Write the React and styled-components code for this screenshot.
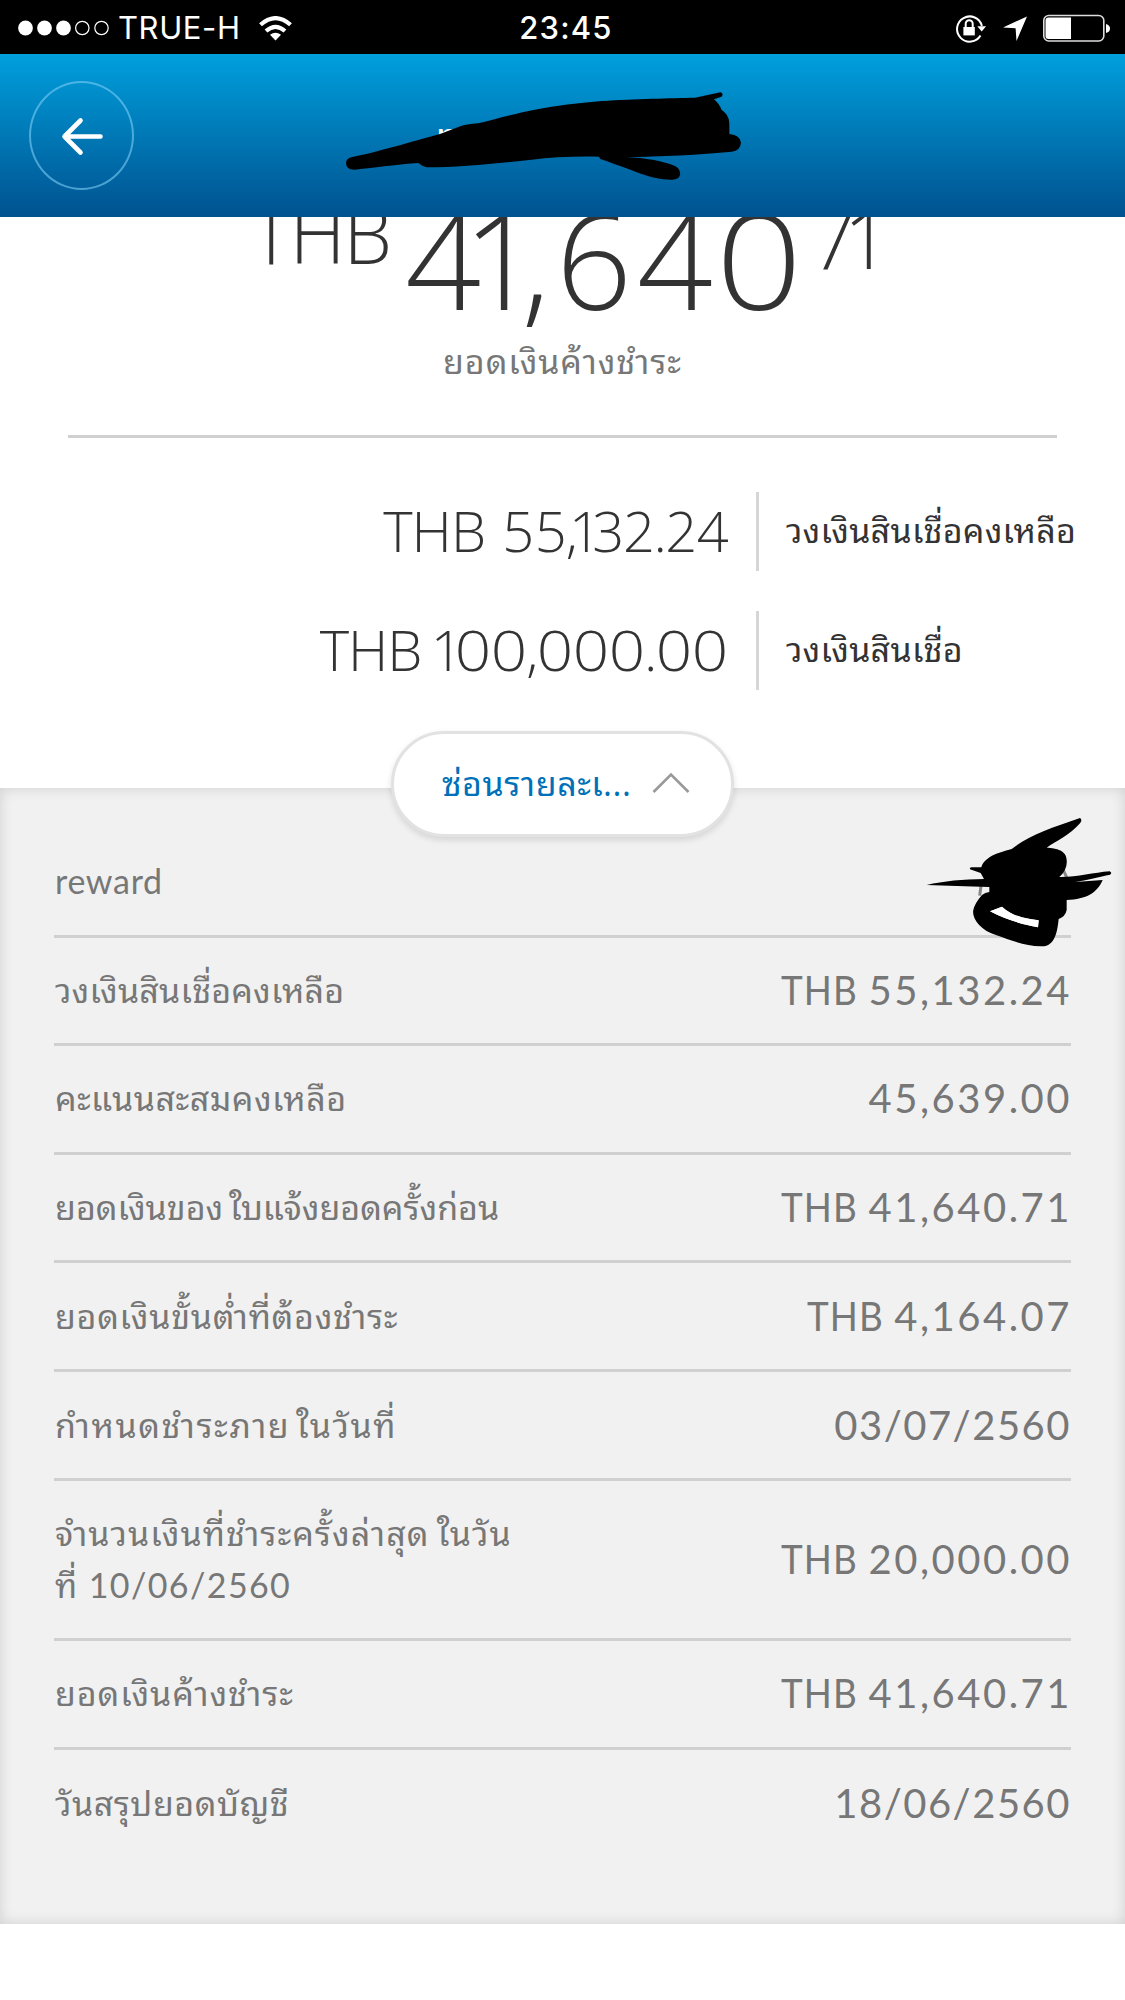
import React from "react";
import styled, { createGlobalStyle } from "styled-components";

const Global = createGlobalStyle`
  * { box-sizing: border-box; }
  html, body { margin: 0; padding: 0; background: #fff; }
`;

const thai = `"Garuda", "Waree", "Umpush", "Noto Sans Thai Looped", "Loma", "Noto Sans Thai", "Noto Sans", sans-serif`;

const Screen = styled.main`
  position: relative;
  width: 1125px;
  height: 2000px;
  overflow: hidden;
  background: #fff;
  font-family: "Open Sans", ${thai};
  color: #333;
`;

const StatusBar = styled.header`
  height: 54px;
  background: #000;
  color: #fff;
  display: grid;
  grid-template-columns: 1fr auto 1fr;
  align-items: center;
  padding: 2px 14px 0 18px;
  font: 400 31px/44px Inter, Roboto, sans-serif;
`;
const StatusLeft = styled.div`display: flex; align-items: center;`;
const StatusRight = styled.div`display: flex; align-items: center; justify-content: flex-end;`;
const Carrier = styled.span`margin: 0 18px 0 8px; letter-spacing: 0.6px;`;
const Clock = styled.span`font-weight: 550; letter-spacing: 1.2px; padding-left: 3px;`;

const NavBar = styled.nav`
  position: relative;
  z-index: 2;
  height: 163px;
  background: linear-gradient(#009fdd, #00528f);
  display: flex;
  align-items: center;
  padding-left: 29px;
`;
const BackButton = styled.button`
  width: 105px;
  height: 109px;
  padding: 0;
  border: 2px solid rgba(125, 205, 245, 0.6);
  border-radius: 50%;
  background: none;
  display: grid;
  place-items: center;
`;
const Title = styled.h1`
  margin: 0 0 0 302px;
  color: #fff;
  font: 600 37px/50px "Open Sans", sans-serif;
`;
const Ink = styled.svg`
  position: absolute;
  left: ${(p) => p.$x}px;
  top: ${(p) => p.$y}px;
  pointer-events: none;
`;

const Balance = styled.section`
  display: flow-root;
  height: 221px;
  margin: 0 68px;
  border-bottom: 3px solid #d0d0d0;
`;
const Amount = styled.div`
  display: flex;
  align-items: flex-start;
  height: 130px;
  margin-top: -32px;
  font-weight: 300;
`;
const Currency = styled.span`
  width: 322px;
  margin-right: 13.5px;
  text-align: right;
  font-size: 81px;
  line-height: 95px;
  letter-spacing: -2px;
  transform: scaleX(0.955);
  transform-origin: right;
`;
const Whole = styled.span`font-size: 133px; line-height: 147px; white-space: nowrap;`;
const Cents = styled.span`font-size: 81px; line-height: 105px; margin-left: 7.5px; white-space: nowrap;`;
const Figures = styled.span`margin-left: ${(p) => p.$lead}em;`;
const Glyph = styled.span`letter-spacing: ${(p) => p.$track}em;`;
const WideGlyph = styled(Glyph)`
  display: inline-block;
  transform: scaleX(1.14);
  transform-origin: 0.286em 50%;
`;
const Caption = styled.p`
  margin: 21px 0 0;
  text-align: center;
  font-size: 34px;
  line-height: 50px;
  letter-spacing: 0.9px;
  color: #777;
`;

const Limits = styled.section`
  height: 350px;
  padding-top: 54px;
  display: flex;
  flex-direction: column;
  gap: 40px;
`;
const LimitRow = styled.div`
  display: grid;
  grid-template-columns: 756px 1fr;
  height: 79px;
`;
const LimitValue = styled.div`
  text-align: right;
  white-space: nowrap;
  padding-right: 28px;
  font-size: 56px;
  font-weight: 300;
  line-height: 76px;
`;
const LimitUnit = styled.span`letter-spacing: -1px; margin-right: 17px;`;
const LimitLabel = styled.div`
  border-left: 3px solid #d6d6d6;
  padding-left: 27px;
  font-size: 34px;
  line-height: 77px;
  letter-spacing: 0.25px;
  white-space: nowrap;
`;

const Toggle = styled.button`
  position: absolute;
  z-index: 3;
  left: 391px;
  top: 731px;
  width: 343px;
  height: 106px;
  border: 3px solid #e2e2e2;
  border-radius: 53px;
  background: #fff;
  box-shadow: 0 3px 6px rgba(0, 0, 0, 0.12);
  display: flex;
  align-items: center;
  justify-content: space-between;
  padding: 0 41px 2px 48px;
  color: #0071b8;
  font: 400 34px/50px "Open Sans", ${thai};
  letter-spacing: 0.55px;
`;

const Details = styled.section`
  height: 1136px;
  background: #f1f1f1;
  padding: 40px 54px 0;
  box-shadow: inset 0 0 14px rgba(0, 0, 0, 0.14);
`;
const Row = styled.div`
  height: ${(p) => p.$h}px;
  display: flex;
  align-items: center;
  justify-content: space-between;
  border-bottom: ${(p) => (p.$last ? 0 : "3px solid #d0d0d0")};
  color: #777;
`;
const RowLabel = styled.div`
  padding: 0 0 1px 1px;
  font: 400 34px/52px Lato, ${thai};
`;
const LabelLine = styled.div`
  letter-spacing: ${(p) => p.$track}px;
  word-spacing: ${(p) => p.$gap || 0}px;
  white-space: nowrap;
`;
const RowValue = styled.div`
  display: flex;
  padding-bottom: 1px;
  font: 400 40px/52px Lato, sans-serif;
`;
const Unit = styled.span`
  width: 87.5px;
  letter-spacing: 1.2px;
  transform: scaleX(0.92);
  transform-origin: left;
`;
const Figure = styled.span`
  letter-spacing: ${(p) => (p.$date ? 1.5 : 2.5)}px;
  margin-right: ${(p) => (p.$date ? 0 : -1)}px;
`;

const rows = [
  { lines: [["reward", 0.7]], h: 109.5 },
  { lines: [["วงเงินสินเชื่อคงเหลือ", 0.2]], unit: "THB", value: "55,132.24", h: 108.6 },
  { lines: [["คะแนนสะสมคงเหลือ", 0.5]], value: "45,639.00", h: 108.7 },
  { lines: [["ยอดเงินของ ใบแจ้งยอดครั้งก่อน", 0, -3]], unit: "THB", value: "41,640.71", h: 108.7 },
  { lines: [["ยอดเงินขั้นต่ำที่ต้องชำระ", 0.72]], unit: "THB", value: "4,164.07", h: 108.7 },
  { lines: [["กำหนดชำระภาย ในวันที่", 1.6, -4.5]], date: "03/07/2560", h: 108.7 },
  {
    lines: [["จำนวนเงินที่ชำระครั้งล่าสุด ในวัน", 1.05, -2.5], ["ที่ 10/06/2560", 1.4]],
    unit: "THB",
    value: "20,000.00",
    h: 160.3,
  },
  { lines: [["ยอดเงินค้างชำระ", 0.9]], unit: "THB", value: "41,640.71", h: 108.4 },
  { lines: [["วันสรุปยอดบัญชี", 0.55]], date: "18/06/2560", h: 108.7 },
];

const displayWidths = { 0: 0.66, 1: 0.27, 4: 0.6, 6: 0.62, 7: 0.57, ",": 0.25 };
const textWidths = { 0: 0.645, 1: 0.3, 2: 0.57, 3: 0.53, 4: 0.55, 5: 0.58, ",": 0.17, ".": 0.18 };
const advances = { ",": 0.21, ".": 0.23 };

// Proportional figure spacing: half of each glyph's width change goes to either side of it.
function Digits({ text, widths }) {
  const side = (c) => (c ? (widths[c] - (advances[c] || 0.572)) / 2 : 0);
  return (
    <Figures $lead={side(text[0])}>
      {[...text].map((c, i) => {
        const Part = c === "0" ? WideGlyph : Glyph;
        return <Part key={i} $track={side(c) + side(text[i + 1])}>{c}</Part>;
      })}
    </Figures>
  );
}

function SignalDots() {
  return (
    <svg width="92" height="18" viewBox="0 0 92 18">
      {[7.5, 26.5, 45.5].map((x) => <circle key={x} cx={x} cy="9" r="7.4" fill="#fff" />)}
      {[64.3, 83.5].map((x) => <circle key={x} cx={x} cy="9" r="6.7" fill="none" stroke="#fff" strokeWidth="1.2" />)}
    </svg>
  );
}
function Wifi() {
  return (
    <svg width="33" height="25" viewBox="0 0 33 25" fill="none" stroke="#fff" strokeWidth="4.2">
      <path d="M1.5 8.8 Q16.5 -4.5 31.5 8.8" />
      <path d="M7 15 Q16.5 6.8 26 15" />
      <path d="M11 18.8 Q16.5 14.5 22 18.8 L16.5 24.5Z" fill="#fff" stroke="none" />
    </svg>
  );
}
function StatusIcons() {
  return (
    <svg width="156" height="30" viewBox="0 0 156 30" fill="none">
      <path d="M25.5 22.5 A12.6 12.6 0 1 1 26.9 13" stroke="#fff" strokeWidth="2" />
      <path d="M22.3 13.3 h8.8 l-4.4 5.2z" fill="#fff" />
      <path d="M8.4 14 h11.4 v8.4 h-11.4z" fill="#fff" />
      <path d="M10.7 14 v-3.3 a3.5 3.5 0 0 1 7 0 V14" stroke="#fff" strokeWidth="2" />
      <path d="M72 3.5 L61.5 28 L60.6 15.2 L48 14.4Z" fill="#fff" />
      <rect x="88.8" y="2.5" width="60" height="25.5" rx="5" stroke="#ddd" strokeWidth="1.6" />
      <path d="M93.5 4.5 h22.5 v21.5 h-22.5 q-3 0 -3 -3 v-15.5 q0 -3 3 -3z" fill="#fff" />
      <path d="M151 11 q4 1 4 4.5 q0 3.5 -4 4.5z" fill="#fff" />
    </svg>
  );
}

export default function App() {
  return (
    <Screen>
      <Global />
      <StatusBar>
        <StatusLeft>
          <SignalDots />
          <Carrier>TRUE-H</Carrier>
          <Wifi />
        </StatusLeft>
        <Clock>23:45</Clock>
        <StatusRight><StatusIcons /></StatusRight>
      </StatusBar>
      <NavBar>
        <BackButton aria-label="Back">
          <svg width="46" height="40" viewBox="0 0 46 40" fill="none" stroke="#fff" strokeWidth="4.6" strokeLinecap="round" strokeLinejoin="round">
            <path d="M41.5 20.5 H5.5 M21.5 4.5 L5.5 20.5 L21.5 36.5" />
          </svg>
        </BackButton>
        <Title>n</Title>
        <Ink $x={325} $y={6} width="450" height="160" viewBox="0 0 1350 480">
          <path d="M82 291 C150 278 260 245 345 222 L408 198 Q420 193 460 190 C550 168 640 138 830 123 C930 116 1040 115 1110 113 L1186 97 Q1197 100 1190 110 L1167 118 Q1182 130 1190 150 Q1212 163 1213 190 L1213 222 Q1246 226 1248 248 Q1246 272 1220 275 C1130 284 1000 290 905 291 C960 294 1010 302 1050 318 Q1068 328 1065 346 Q1060 360 1040 359 C980 360 930 332 826 297 L822 290 C750 288 680 292 620 299 C520 310 400 322 305 322 Q290 318 280 309 C220 313 150 323 90 329 Q63 330 63 308 Q64 294 82 291Z" />
        </Ink>
      </NavBar>
      <Balance>
        <Amount>
          <Currency>THB</Currency>
          <Whole><Digits text="41,640" widths={displayWidths} /></Whole>
          <Cents><Digits text="71" widths={displayWidths} /></Cents>
        </Amount>
        <Caption>ยอดเงินค้างชำระ</Caption>
      </Balance>
      <Limits>
        <LimitRow>
          <LimitValue><LimitUnit>THB</LimitUnit><Digits text="55,132.24" widths={textWidths} /></LimitValue>
          <LimitLabel>วงเงินสินเชื่อคงเหลือ</LimitLabel>
        </LimitRow>
        <LimitRow>
          <LimitValue><LimitUnit>THB</LimitUnit><Digits text="100,000.00" widths={textWidths} /></LimitValue>
          <LimitLabel>วงเงินสินเชื่อ</LimitLabel>
        </LimitRow>
      </Limits>
      <Toggle>
        <span>ซ่อนรายละเ...</span>
        <svg width="38" height="22" viewBox="0 0 38 22" fill="none" stroke="#999" strokeWidth="2.6">
          <path d="M1.5 20 L19 2.5 L36.5 20" />
        </svg>
      </Toggle>
      <Details>
        {rows.map((row, i) => (
          <Row key={i} $h={row.h} $last={i === rows.length - 1}>
            <RowLabel>
              {row.lines.map(([text, track, gap]) => (
                <LabelLine key={text} $track={track} $gap={gap}>{text}</LabelLine>
              ))}
            </RowLabel>
            {(row.value || row.date) && (
              <RowValue>
                {row.unit && <Unit>{row.unit}</Unit>}
                <Figure $date={!!row.date}>{row.value || row.date}</Figure>
              </RowValue>
            )}
          </Row>
        ))}
      </Details>
      <Ink $x={900} $y={780} width="225" height="190" viewBox="0 0 675 570">
        <path d="M243 318 L239 347 M490 270 L500 292" stroke="#888" strokeWidth="9" fill="none" />
        <path fillRule="evenodd" d="M540 114 Q548 120 540 130 C510 165 470 182 440 203 C470 204 500 212 500 240 Q503 268 478 291 C530 292 580 278 629 274 Q638 279 630 284 C600 290 560 300 525 306 L608 300 C592 338 560 358 500 360 L500 390 Q496 410 476 417 C472 455 465 500 425 499 C380 500 330 480 290 466 C240 450 215 415 220 390 Q224 370 246 345 Q255 337 268 336 L268 321 C200 318 140 318 80 315 C130 303 190 298 252 297 L242 279 L210 268 Q208 262 216 262 L244 262 C255 225 310 215 335 207 C390 165 450 145 540 114Z M270 394 L306 380 C335 408 380 418 416 421 L414 442 C370 434 320 420 270 394Z" />
        <path d="M270 394 L306 380 C335 408 380 418 416 421 L414 442 C370 434 320 420 270 394Z" fill="#fff" />
      </Ink>
    </Screen>
  );
}
